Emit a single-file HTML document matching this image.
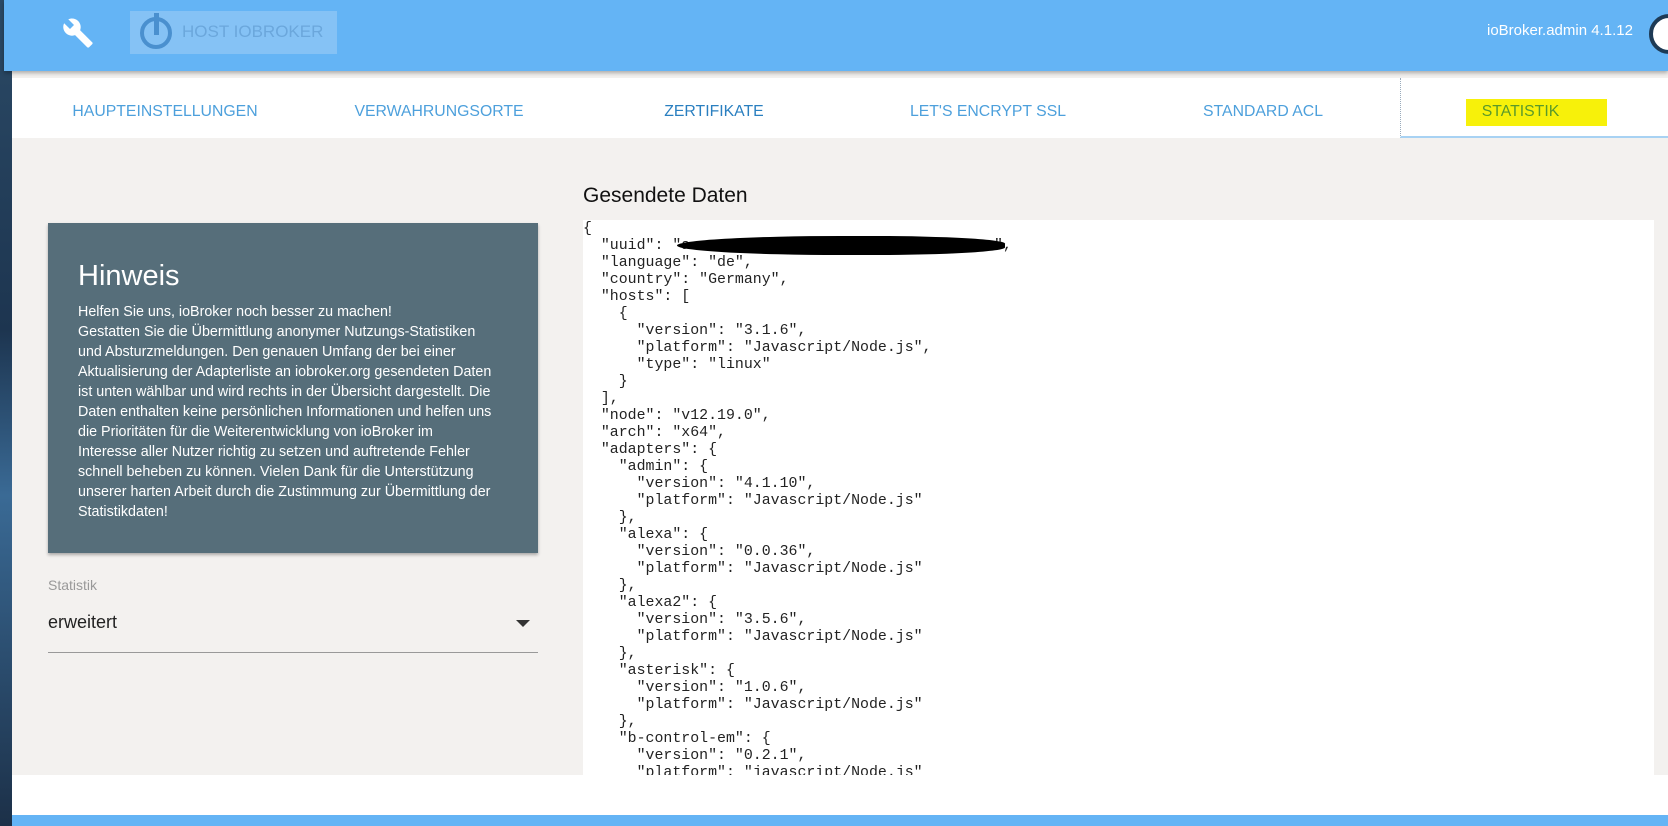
<!DOCTYPE html>
<html><head><meta charset="utf-8"><style>
*{margin:0;padding:0;box-sizing:border-box}
body{width:1668px;height:826px;overflow:hidden;background:#f3f1ef;font-family:"Liberation Sans",sans-serif;position:relative}
.abs{position:absolute}
#strip{left:0;top:0;width:12px;height:826px;background:linear-gradient(#2b4a66,#1d3550 40%,#3a6a95 60%,#1c3048)}
#top{left:4px;top:0;width:1664px;height:71px;background:#64b4f5;box-shadow:0 2px 4px rgba(0,0,0,.3)}
#tabs{left:12px;top:78px;width:1656px;height:60px;background:#fff}
.tab{position:absolute;top:0;height:60px;width:274px;line-height:68px;text-align:center;font-size:15.8px;color:#4da0dc}
#json{left:583px;top:220px;width:1071px;height:555px;background:#fff;overflow:hidden;font-family:"Liberation Mono",monospace;font-size:14.9px;line-height:17px;color:#222;padding-top:1px;white-space:pre}
#box{left:48px;top:223px;width:490px;height:330px;background:#566e7a;color:#fff;padding:29px 46px 30px 30px;box-shadow:0 2px 3px rgba(0,0,0,.3)}
</style></head><body>
<div class="abs" id="strip"></div>
<div class="abs" id="top">
 <svg class="abs" style="left:58px;top:17px" width="32" height="32" viewBox="0 0 24 24"><path fill="#fff" d="M22.7 19l-9.1-9.1c.9-2.3.4-5-1.5-6.9-2-2-5-2.4-7.4-1.3L9 6 6 9 1.6 4.7C.4 7.1.9 10.1 2.9 12.1c1.9 1.9 4.6 2.4 6.9 1.5l9.1 9.1c.4.4 1 .4 1.4 0l2.3-2.3c.5-.4.5-1.1.1-1.4z"/></svg>
 <div class="abs" style="left:126px;top:11px;width:207px;height:43px;background:#85c2f5"></div>
 <div class="abs" style="left:136px;top:17px;width:32px;height:32px;border:4px solid #4a90cf;border-radius:50%"></div>
 <div class="abs" style="left:150px;top:13px;width:5px;height:22px;background:#4a90cf"></div>
 <div class="abs" style="left:178px;top:22px;font-size:17px;color:#6ba7dc">HOST IOBROKER</div>
 <div class="abs" style="left:1483px;top:22px;font-size:15px;color:#fff">ioBroker.admin 4.1.12</div>
 <div class="abs" style="left:1645px;top:14px;width:40px;height:40px;border:4px solid #1d3a55;border-radius:50%;background:#fff"></div>
</div>
<div class="abs" id="tabs">
 <div class="tab" style="left:16px">HAUPTEINSTELLUNGEN</div>
 <div class="tab" style="left:290px">VERWAHRUNGSORTE</div>
 <div class="tab" style="left:565px;color:#2a7fc0">ZERTIFIKATE</div>
 <div class="tab" style="left:839px">LET'S ENCRYPT SSL</div>
 <div class="tab" style="left:1114px">STANDARD ACL</div>
 <div class="tab" style="left:1388px;width:268px;border-left:1px dotted #9ab;border-bottom:2px solid #a8d2f3"><span style="background:#f7f10a;color:#5a9a2a;padding:4px 48px 6px 16px;margin-left:4px">STATISTIK</span></div>
</div>
<div class="abs" id="box">
 <div style="font-size:29px;font-weight:300;margin-top:8px;margin-bottom:9px">Hinweis</div>
 <div style="font-size:14.3px;line-height:20px">Helfen Sie uns, ioBroker noch besser zu machen!<br>Gestatten Sie die Übermittlung anonymer Nutzungs-Statistiken und Absturzmeldungen. Den genauen Umfang der bei einer Aktualisierung der Adapterliste an iobroker.org gesendeten Daten ist unten wählbar und wird rechts in der Übersicht dargestellt. Die Daten enthalten keine persönlichen Informationen und helfen uns die Prioritäten für die Weiterentwicklung von ioBroker im Interesse aller Nutzer richtig zu setzen und auftretende Fehler schnell beheben zu können. Vielen Dank für die Unterstützung unserer harten Arbeit durch die Zustimmung zur Übermittlung der Statistikdaten!</div>
</div>
<div class="abs" style="left:48px;top:577px;font-size:14px;color:#999">Statistik</div>
<div class="abs" style="left:48px;top:612px;font-size:18px;color:#222">erweitert</div>
<div class="abs" style="left:516px;top:620px;width:0;height:0;border-left:7px solid transparent;border-right:7px solid transparent;border-top:7px solid #333"></div>
<div class="abs" style="left:48px;top:652px;width:490px;height:1px;background:#999"></div>
<div class="abs" style="left:583px;top:184px;font-size:21px;color:#111">Gesendete Daten</div>
<div class="abs" id="json">{
  "uuid": "a                                  ",
  "language": "de",
  "country": "Germany",
  "hosts": [
    {
      "version": "3.1.6",
      "platform": "Javascript/Node.js",
      "type": "linux"
    }
  ],
  "node": "v12.19.0",
  "arch": "x64",
  "adapters": {
    "admin": {
      "version": "4.1.10",
      "platform": "Javascript/Node.js"
    },
    "alexa": {
      "version": "0.0.36",
      "platform": "Javascript/Node.js"
    },
    "alexa2": {
      "version": "3.5.6",
      "platform": "Javascript/Node.js"
    },
    "asterisk": {
      "version": "1.0.6",
      "platform": "Javascript/Node.js"
    },
    "b-control-em": {
      "version": "0.2.1",
      "platform": "javascript/Node.js"</div>
<div class="abs" style="left:677px;top:236px;width:328px;height:19px;background:#000;border-radius:50% 40% 40% 50%"></div>
<div class="abs" style="left:12px;top:775px;width:1656px;height:40px;background:#fff"></div>
<div class="abs" style="left:12px;top:815px;width:1656px;height:11px;background:#64b4f5"></div>
</body></html>
